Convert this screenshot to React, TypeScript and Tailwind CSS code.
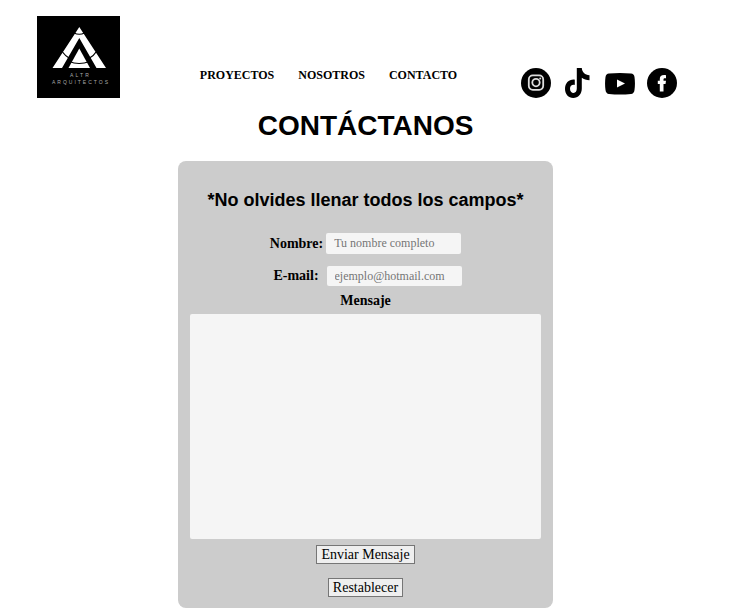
import type { ReactNode } from "react";

const links = ["PROYECTOS", "NOSOTROS", "CONTACTO"];

function Logo() {
  return (
    <svg viewBox="0 0 83 82" className="h-[82px] w-[83px]" role="img" aria-label="ALTR Arquitectos">
      <rect width="83" height="82" fill="#000" />
      <path d="M42.300 11 L15.500 52 H25 L42.300 22 L59.500 52 H69 Z" fill="#fff" />
      <path d="M42.300 32.500 L31.500 52 H53 Z" fill="#fff" />
      <path d="M37 17 Q42.300 19.500 47.500 17 M25.500 36 Q28 39.500 32 42 M59 36 Q57 39.500 52.500 42 M32 45.500 Q42 49.500 52.500 45.500" fill="none" stroke="#000" strokeWidth="1.200" />
      <text x="43.500" y="61" textAnchor="middle" fill="#aaa" fontSize="5" letterSpacing="2.200" fontFamily="Liberation Sans, sans-serif">ALTR</text>
      <text x="44" y="68" textAnchor="middle" fill="#aaa" fontSize="5" letterSpacing="2" fontFamily="Liberation Sans, sans-serif">ARQUITECTOS</text>
    </svg>
  );
}

function Social({ label, children }: { label: string; children: ReactNode }) {
  return (
    <a href="#" aria-label={label}>
      <svg viewBox="0 0 30 30" className="size-[30px]">{children}</svg>
    </a>
  );
}

export default function App() {
  return (
    <div className="bg-white pr-4 font-['Liberation_Serif',serif] text-black">
      <header className="flex items-end justify-between pt-4 pr-[54px] pl-[37px]">
        <a href="#"><Logo /></a>
        <nav className="mb-3.5 flex gap-6 pl-4 text-xs leading-[18px] font-bold">
          {links.map((l) => <a key={l} href="#">{l}</a>)}
        </nav>
        <div className="flex gap-3">
          <Social label="Instagram">
            <circle cx="15" cy="15" r="15" />
            <g fill="none" stroke="#ddd" strokeWidth="1.800">
              <rect x="7.800" y="7.400" width="14.400" height="14.400" rx="4" />
              <circle cx="15" cy="14.600" r="3.700" />
            </g>
            <circle cx="19.200" cy="10.500" r="1" fill="#ddd" />
          </Social>
          <Social label="TikTok">
            <path d="M13.800 0 H18.800 C19 4 22 7 26.500 7.300 V12.300 C23.500 12.300 20.700 11.400 18.800 9.800 V20.500 C18.800 26 15.200 30 10.200 30 C5.500 30 2 26 2 21 C2 15 6.300 11 11.800 11.700 V16.900 C9 16.200 7 18 7 20.700 C7 23.200 8.500 24.900 10.500 24.900 C12.600 24.900 13.800 23.300 13.800 20.500 Z" />
          </Social>
          <Social label="YouTube">
            <path d="M4 5.500 Q15 4.300 26 5.500 Q29 5.800 29.500 9 Q30.400 15.500 29.500 22 Q29 25.700 26 26 Q15 27 4 26 Q1 25.700 .5 22 Q-.4 15.500 .5 9 Q1 5.800 4 5.500 Z" />
            <path d="M12 11.500 V19.500 L20 15.500 Z" fill="#fff" />
          </Social>
          <Social label="Facebook">
            <circle cx="15" cy="15" r="15" />
            <path d="M12.800 23.500 V16 H10.800 V12.700 H12.800 V11 C12.800 8 14.500 6.700 19 7.200 V10.200 C17 10 16.500 10.400 16.500 11.500 V12.700 H19 L18.500 16 H16.500 V23.500 Z" fill="#fff" />
          </Social>
        </div>
      </header>
      <main className="flex flex-col items-center">
        <h1 className="mt-3 font-['Liberation_Sans',sans-serif] text-[28px] leading-8 font-bold">CONTÁCTANOS</h1>
        <form className="mt-[19px] flex w-full max-w-[375px] flex-col items-center rounded-lg bg-[#ccc] px-3 pt-7 pb-[11px] text-sm leading-5">
          <h2 className="font-['Liberation_Sans',sans-serif] text-lg leading-[22px] font-bold">*No olvides llenar todos los campos*</h2>
          <div className="mt-[22px] flex items-center gap-[3px]">
            <label htmlFor="name" className="font-bold">Nombre:</label>
            <input id="name" type="text" placeholder="Tu nombre completo" className="h-[21px] w-[135px] rounded-xs bg-[#f5f5f5] px-2 text-xs placeholder:text-[#757575]" />
          </div>
          <div className="mt-3 flex items-center gap-2 pl-1">
            <label htmlFor="email" className="font-bold">E-mail:</label>
            <input id="email" type="email" placeholder="ejemplo@hotmail.com" className="h-5 w-[135px] rounded-xs bg-[#f5f5f5] px-2 text-xs placeholder:text-[#757575]" />
          </div>
          <label htmlFor="message" className="mt-[5px] font-bold">Mensaje</label>
          <textarea id="message" className="mt-[3px] h-[225px] w-full resize-none rounded-xs bg-[#f5f5f5] p-2" />
          <button type="submit" className="mt-1.5 h-[19px] border border-[#767676] bg-[#efefef] px-1 leading-4">Enviar Mensaje</button>
          <button type="reset" className="mt-3.5 h-[19px] border border-[#767676] bg-[#efefef] px-1 leading-4">Restablecer</button>
        </form>
      </main>
    </div>
  );
}
